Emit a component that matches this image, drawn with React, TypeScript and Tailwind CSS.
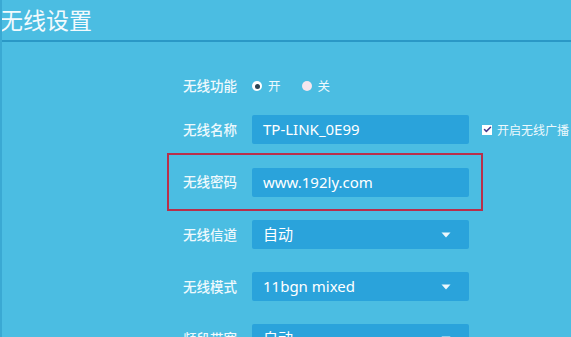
import { Check } from 'lucide-react';

const cjk = { fontFamily: '"Noto Sans CJK SC", "Noto Sans", sans-serif' };
const latin = { fontFamily: '"Noto Sans", "Noto Sans CJK SC", sans-serif' };

function Caret() {
  return (
    <svg width="10" height="6" viewBox="0 0 10 6" className="shrink-0">
      <path d="M0.5 0.5 L9.5 0.5 L5 5.5 Z" fill="#eaf7fc" />
    </svg>
  );
}

function Field({ value, select }: { value: string; select?: boolean }) {
  return (
    <div className="w-[217px] h-[29px] bg-[#2aa3db] rounded-[2px] flex items-center justify-between pl-[11px] pr-[18px]">
      <span className="text-[15px] text-white leading-none" style={latin}>
        {value}
      </span>
      {select && <Caret />}
    </div>
  );
}

function Label({ children }: { children: string }) {
  return (
    <span className="w-[69px] shrink-0 text-[13.5px] font-medium text-[#eef9fd] leading-none" style={cjk}>
      {children}
    </span>
  );
}

export default function App() {
  return (
    <div className="w-[571px] h-[337px] overflow-hidden bg-[#4bbde2] border-l-2 border-[#3aa9d3]">
      {/* Header */}
      <div className="h-[42px] border-b-2 border-[#2a98c6] flex items-center">
        <h1 className="text-[23px] text-[#f2fafd] leading-none -ml-[2px] -mt-[2px]" style={cjk}>
          无线设置
        </h1>
      </div>

      <div className="pt-[34px]">
        {/* 无线功能 */}
        <div className="flex items-center h-[20px] pl-[181px]">
          <Label>无线功能</Label>
          <div className="flex items-center gap-[6px] text-[12.5px] text-[#eef9fd]" style={cjk}>
            <span className="w-[10px] h-[10px] rounded-full bg-white flex items-center justify-center">
              <span className="w-[5px] h-[5px] rounded-full bg-[#2c4455]" />
            </span>
            <span>开</span>
            <span className="w-[10px] h-[10px] rounded-full bg-[#f6e6ee] ml-[15px]" />
            <span>关</span>
          </div>
        </div>

        {/* 无线名称 */}
        <div className="flex items-center mt-[19px] pl-[181px]">
          <Label>无线名称</Label>
          <Field value="TP-LINK_0E99" />
          <div className="flex items-center ml-[13px] gap-[5px]">
            <span className="w-[10px] h-[10px] bg-white flex items-center justify-center">
              <Check className="w-[9px] h-[9px] text-[#4a3a8c]" strokeWidth={4} />
            </span>
            <span className="text-[12px] text-[#eef9fd] leading-none" style={cjk}>
              开启无线广播
            </span>
          </div>
        </div>

        {/* 无线密码 (highlighted) */}
        <div className="mt-[9px] ml-[165px] w-[316px] h-[58px] border-[2.5px] border-[#b82f4a] flex items-center pl-[14px]">
          <Label>无线密码</Label>
          <Field value="www.192ly.com" />
        </div>

        {/* 无线信道 */}
        <div className="flex items-center mt-[9px] pl-[181px]">
          <Label>无线信道</Label>
          <Field value="自动" select />
        </div>

        {/* 无线模式 */}
        <div className="flex items-center mt-[23px] pl-[181px]">
          <Label>无线模式</Label>
          <Field value="11bgn mixed" select />
        </div>

        {/* 频段带宽 */}
        <div className="flex items-center mt-[23px] pl-[181px]">
          <Label>频段带宽</Label>
          <Field value="自动" select />
        </div>
      </div>
    </div>
  );
}
